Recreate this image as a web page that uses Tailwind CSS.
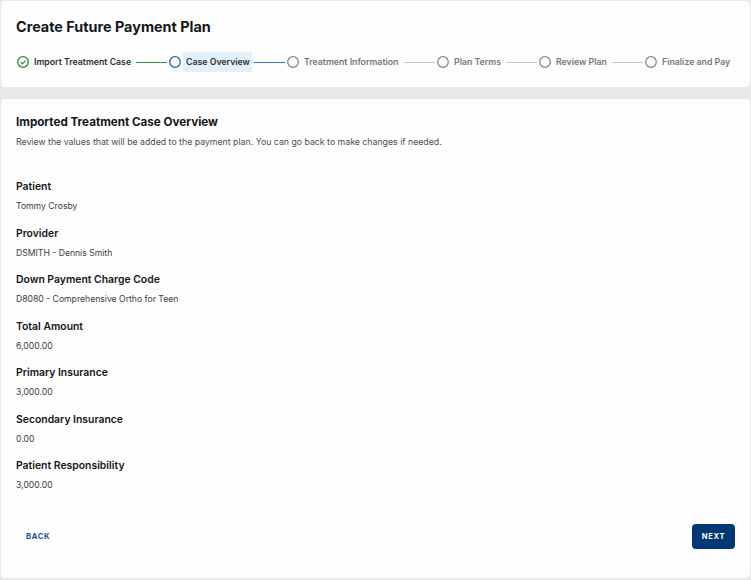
<!DOCTYPE html>
<html><head><meta charset="utf-8"><script src="https://cdn.jsdelivr.net/npm/@tailwindcss/browser@4"></script></head>
<body class="bg-[#e8e8e8] font-['Inter',sans-serif] w-[751px] h-[580px] overflow-hidden">
<div class="flex flex-col gap-[12px] px-px pt-px h-[578px]">
<header class="h-[86px] bg-[#fdfdfd] rounded-[4px] px-[15px] pt-[17px] shrink-0">
<h1 class="text-[14.4px] leading-[18px] font-bold text-[#14171a]">Create Future Payment Plan</h1>
<div class="flex items-center mt-[16px] h-[20px] text-[8.75px] leading-[20px] font-semibold whitespace-nowrap">
<svg class="w-[12px] h-[12px] ml-[1px] shrink-0" viewBox="0 0 12 12" fill="none"><circle cx="6" cy="6" r="5.3" stroke="#2e8540" stroke-width="1.3"/><path d="M3.6 6.2l1.7 1.7L8.5 4.6" stroke="#2e8540" stroke-width="1.1"/></svg>
<span class="ml-[5px] w-[97px] text-[#2b2f33]">Import Treatment Case</span>
<span class="w-[31px] h-px bg-[#2e8540] ml-[5px]"></span>
<svg class="w-[12px] h-[12px] ml-[2px] shrink-0" viewBox="0 0 12 12" fill="none"><circle cx="6" cy="6" r="5.3" stroke="#2563b8" stroke-width="1.3"/></svg>
<span class="ml-[2px] px-[3px] w-[69px] h-[20px] bg-[#e3effa] text-[#2b2f33]">Case Overview</span>
<span class="w-[31px] h-px bg-[#2f74c9] ml-[2px]"></span>
<svg class="w-[12px] h-[12px] ml-[2px] shrink-0" viewBox="0 0 12 12" fill="none"><circle cx="6" cy="6" r="5.3" stroke="#85888c" stroke-width="1.3"/></svg>
<span class="ml-[5px] w-[95px] text-[#75787c]">Treatment Information</span>
<span class="w-[31px] h-px bg-[#c4c6c8] ml-[5px]"></span>
<svg class="w-[12px] h-[12px] ml-[2px] shrink-0" viewBox="0 0 12 12" fill="none"><circle cx="6" cy="6" r="5.3" stroke="#85888c" stroke-width="1.3"/></svg>
<span class="ml-[5px] w-[47px] text-[#75787c]">Plan Terms</span>
<span class="w-[31px] h-px bg-[#c4c6c8] ml-[5px]"></span>
<svg class="w-[12px] h-[12px] ml-[2px] shrink-0" viewBox="0 0 12 12" fill="none"><circle cx="6" cy="6" r="5.3" stroke="#85888c" stroke-width="1.3"/></svg>
<span class="ml-[5px] w-[51px] text-[#75787c]">Review Plan</span>
<span class="w-[31px] h-px bg-[#c4c6c8] ml-[5px]"></span>
<svg class="w-[12px] h-[12px] ml-[2px] shrink-0" viewBox="0 0 12 12" fill="none"><circle cx="6" cy="6" r="5.3" stroke="#85888c" stroke-width="1.3"/></svg>
<span class="ml-[5px] text-[#75787c]">Finalize and Pay</span>
</div>
</header>
<main class="flex-1 bg-[#fdfdfd] rounded-[4px] px-[15px] pt-[15px] flex flex-col">
<h2 class="text-[11.65px] leading-[16px] font-bold text-[#14171a]">Imported Treatment Case Overview</h2>
<p class="text-[8.75px] leading-[12px] text-[#4b4f54] mt-[6px]">Review the values that will be added to the payment plan. You can go back to make changes if needed.</p>
<dl class="mt-[32px] flex flex-col gap-[13.5px]">
<div><dt class="text-[10.4px] leading-[14px] font-semibold text-[#14171a]">Patient</dt><dd class="text-[8.65px] leading-[12px] text-[#3a3d40] mt-[6px] mb-[1px]">Tommy Crosby</dd></div>
<div><dt class="text-[10.4px] leading-[14px] font-semibold text-[#14171a]">Provider</dt><dd class="text-[8.65px] leading-[12px] text-[#3a3d40] mt-[6px] mb-[1px]">DSMITH - Dennis Smith</dd></div>
<div><dt class="text-[10.4px] leading-[14px] font-semibold text-[#14171a]">Down Payment Charge Code</dt><dd class="text-[8.65px] leading-[12px] text-[#3a3d40] mt-[6px] mb-[1px]">D8080 - Comprehensive Ortho for Teen</dd></div>
<div><dt class="text-[10.4px] leading-[14px] font-semibold text-[#14171a]">Total Amount</dt><dd class="text-[8.65px] leading-[12px] text-[#3a3d40] mt-[6px] mb-[1px]">6,000.00</dd></div>
<div><dt class="text-[10.4px] leading-[14px] font-semibold text-[#14171a]">Primary Insurance</dt><dd class="text-[8.65px] leading-[12px] text-[#3a3d40] mt-[6px] mb-[1px]">3,000.00</dd></div>
<div><dt class="text-[10.4px] leading-[14px] font-semibold text-[#14171a]">Secondary Insurance</dt><dd class="text-[8.65px] leading-[12px] text-[#3a3d40] mt-[6px] mb-[1px]">0.00</dd></div>
<div><dt class="text-[10.4px] leading-[14px] font-semibold text-[#14171a]">Patient Responsibility</dt><dd class="text-[8.65px] leading-[12px] text-[#3a3d40] mt-[6px] mb-[1px]">3,000.00</dd></div>
</dl>
<div class="flex justify-between items-center mt-[32px]">
<button class="ml-[10px] text-[7.6px] font-bold tracking-[0.7px] text-[#1c4f8f]">BACK</button>
<button class="w-[43px] h-[25px] rounded-[4px] bg-[#003876] text-white text-[7.6px] font-bold tracking-[0.7px]">NEXT</button>
</div>
</main>
</div>
</body></html>
